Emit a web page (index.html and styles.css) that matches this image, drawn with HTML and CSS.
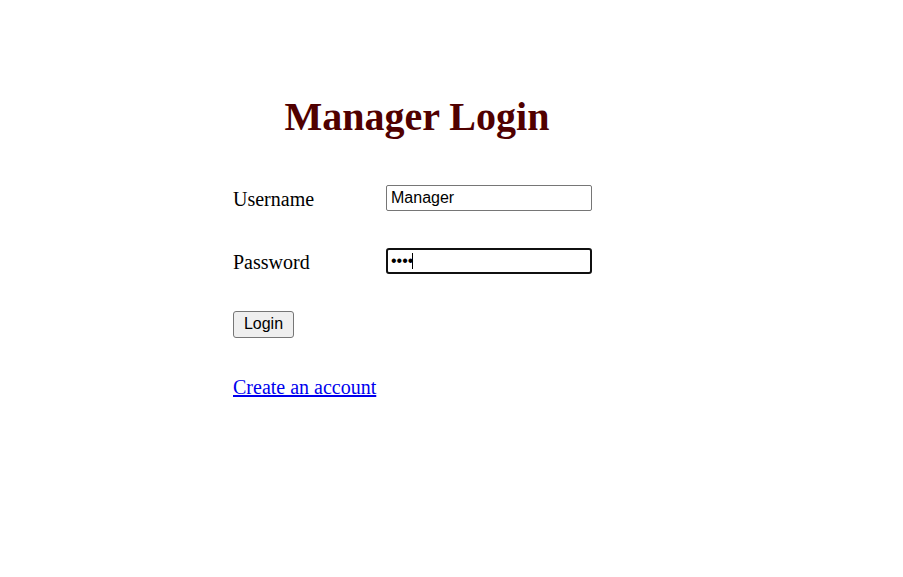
FILE: index.html
```html
<!DOCTYPE html>
<html>
<head>
<meta charset="utf-8">
<link rel="stylesheet" href="styles.css">
</head>
<body>
<div class="wrap">
  <h1 class="title">Manager Login</h1>
  <form class="form">
    <div class="row">
      <label class="label" for="u">Username</label>
      <input class="field" id="u" type="text" value="Manager">
    </div>
    <div class="row">
      <label class="label" for="p">Password</label>
      <div class="pwbox">
        <input class="field focus" id="p" type="password" value="abcd">
        <span class="caret"></span>
      </div>
    </div>
    <div class="row">
      <button type="button" class="btn">Login</button>
    </div>
    <div class="row">
      <a class="link" href="#">Create an account</a>
    </div>
  </form>
</div>
</body>
</html>
```

FILE: styles.css
```css
html, body {
  margin: 0;
  padding: 0;
  background: #fff;
}
body {
  font-family: "Liberation Serif", "Times New Roman", serif;
  color: #000;
}
.wrap {
  width: 368px;
  margin-left: 233px;
  padding-top: 93px;
}
.title {
  margin: 0;
  text-align: center;
  font-size: 40px;
  font-weight: bold;
  color: #500000;
  line-height: 48px;
}
.form {
  margin-top: 44px;
  display: flex;
  flex-direction: column;
  gap: 37px;
}
.row {
  display: flex;
  align-items: center;
  height: 26px;
}
.label {
  width: 153px;
  font-size: 20px;
  padding-top: 3px;
}
.pwbox {
  position: relative;
}
.caret {
  position: absolute;
  left: 26px;
  top: 5px;
  width: 1px;
  height: 16px;
  background: #000;
}
.field {
  box-sizing: border-box;
  width: 206px;
  height: 26px;
  margin: 0;
  padding: 2px 4px 2px;
  border: 1px solid #767676;
  border-radius: 2px;
  font-family: "Liberation Sans", Arial, sans-serif;
  font-size: 16px;
  color: #000;
  outline: none;
  display: block;
}
.field.focus {
  border: 2px solid #101010;
  border-radius: 3px;
  padding: 1px 3px 1px;
}
.btn {
  box-sizing: border-box;
  width: 61px;
  height: 27px;
  margin: 0;
  padding: 0;
  border: 1px solid #767676;
  border-radius: 3px;
  background: #efefef;
  font-family: "Liberation Sans", Arial, sans-serif;
  font-size: 16px;
  color: #000;
}
.link {
  font-size: 20px;
  color: #0000ee;
  text-decoration: underline;
  padding-top: 0;
}
```
